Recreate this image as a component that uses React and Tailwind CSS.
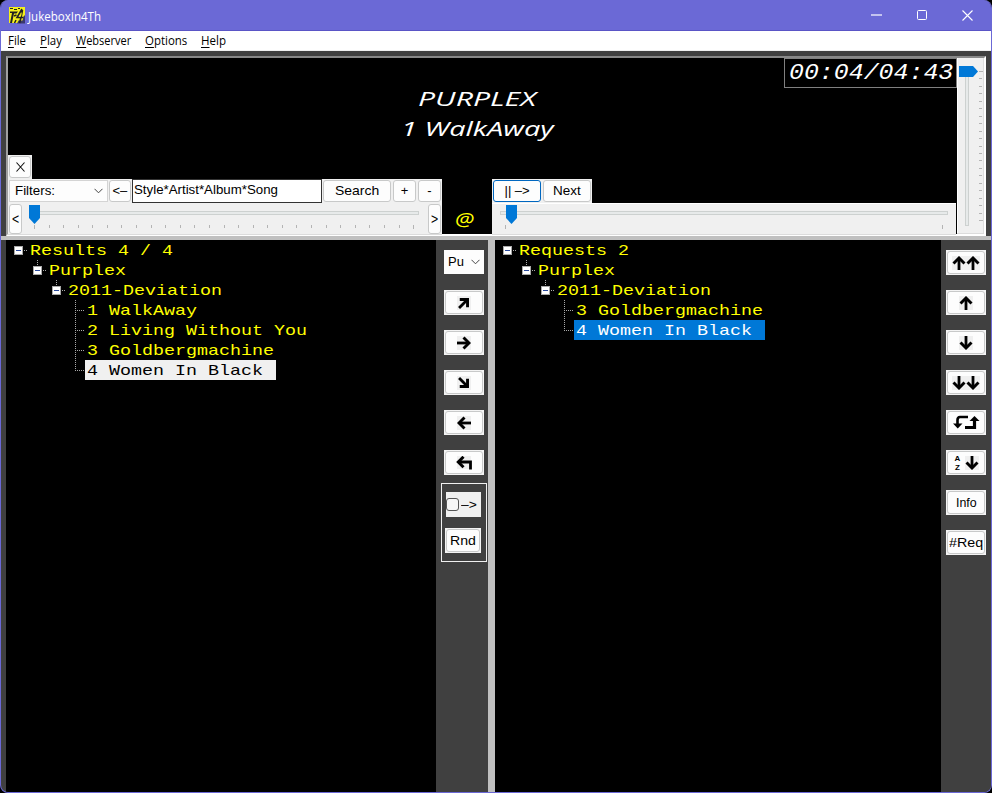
import React, { useLayoutEffect, useRef, useState } from "react";

// Stretches a run of text horizontally so that it fills exactly `w` pixels.
function Fit({ w, className = "", children }) {
  const ref = useRef(null);
  const [scale, setScale] = useState(1);
  useLayoutEffect(() => {
    setScale(w / ref.current.offsetWidth);
  }, [w]);
  return (
    <span className="inline-block shrink-0 whitespace-nowrap text-left" style={{ width: w }}>
      <span
        ref={ref}
        className={"inline-block origin-left whitespace-pre " + className}
        style={{ transform: `scaleX(${scale})` }}
      >
        {children}
      </span>
    </span>
  );
}

function AppIcon() {
  return (
    <svg width="17" height="17" viewBox="0 0 17 17">
      <rect width="16" height="16" fill="#f4f01c" />
      <path d="M1 1.500h3M5 2.500h3M9 1.500h2" stroke="#222" strokeWidth="1.200" />
      <path d="M1 4.500h8L7.500 6.500H5L3 16H1L3 6H1z" fill="#222" />
      <path d="M5 9l2.500-1M7 13l-1.500 3" stroke="#222" strokeWidth="1.500" />
      <path d="M16 8v8.500H8l1.500-3h4l1-4z" fill="#3a386c" />
      <path d="M13 2L8 10.500h4L10.500 16M13.500 3l-1.500 7.500h2.500" fill="none" stroke="#222" strokeWidth="1.600" />
      <path d="M13 5l-3 4.500h2z" fill="#f4f01c" />
    </svg>
  );
}

function TitleBar() {
  return (
    <div className="flex h-[31px] items-center border-b border-[#5a55c6] bg-[#6b69d6] pl-2">
      <AppIcon />
      <span className="ml-[2px] mt-[2px] leading-4">
        <Fit w={73} className="font-['Open_Sans'] text-[12px] text-white">JukeboxIn4Th</Fit>
      </span>
      <div className="ml-auto mr-[18px] flex items-center gap-[35px]">
        <svg width="11" height="11" shapeRendering="crispEdges"><path d="M0 5h11" stroke="#c3c2ef" strokeWidth="2" /></svg>
        <svg width="10" height="10"><rect x=".5" y=".5" width="9" height="9" rx="1" fill="none" stroke="#fff" /></svg>
        <svg width="11" height="11"><path d="M.5.5l10 10M10.500.5l-10 10" stroke="#fff" strokeWidth="1.100" /></svg>
      </div>
    </div>
  );
}

const menus = [
  ["F", "ile", 18],
  ["P", "lay", 22],
  ["W", "ebserver", 55],
  ["O", "ptions", 42],
  ["H", "elp", 25],
];

function MenuBar() {
  return (
    <div className="flex h-5 items-center gap-[14px] border-b border-[#f0f0f0] bg-white pl-[7px] font-['Open_Sans'] text-[12px] leading-4 text-black">
      {menus.map(([a, b, w]) => (
        <Fit key={b} w={w}>
          <span className="underline underline-offset-2">{a}</span>
          {b}
        </Fit>
      ))}
    </div>
  );
}

function Btn({ className = "", children }) {
  return (
    <div className={"flex items-center justify-center rounded-[3px] border border-[#c8c9c9] bg-[#fdfdfd] font-['Liberation_Sans'] text-[13px] leading-4 text-black " + className}>
      {children}
    </div>
  );
}

function Chevron() {
  return (
    <svg width="9" height="6" viewBox="0 0 9 6"><path d="M.5.800l4 4 4-4" fill="none" stroke="#444" /></svg>
  );
}

function HSlider({ width, start, end, thumb, ticks }) {
  return (
    <svg width={width} height="30" shapeRendering="crispEdges">
      <rect x={start + 0.5} y="7.500" width={end - start - 1} height="3" fill="#e7eaea" stroke="#cdd1d0" />
      {ticks.map((x, i) => {
        const edge = i === 0 || i === ticks.length - 1;
        return <rect key={x} x={Math.round(x)} y="21" width="1" height={edge ? 4 : 3} fill="#b4b4b4" />;
      })}
      <path d={`M${thumb} 1h11v13l-5.500 6l-5.500-6z`} fill="#0078d7" shapeRendering="auto" />
    </svg>
  );
}

function VSlider() {
  const ticks = Array.from({ length: 21 }, (_, i) => Math.round(13 + i * 7.45));
  return (
    <svg width="28" height="176" className="block border-b border-[#dcdcdc] bg-[#f0f0f0]" shapeRendering="crispEdges">
      <path d="M.5 0v176" stroke="#fff" />
      <path d="M26.500 0v176" stroke="#dedede" />
      <rect x="8.500" y="8.500" width="3" height="159" fill="#e7eaea" stroke="#cdd1d0" />
      {ticks.map((y, i) => (
        <rect key={y} x="22" y={y} width={i === 0 || i === 20 ? 4 : 3} height="1" fill="#b4b4b4" />
      ))}
      <path d="M2 8h14l5 5.500l-5 5.500h-14z" fill="#0078d7" shapeRendering="auto" />
    </svg>
  );
}

function LeftControls() {
  const ticks = Array.from({ length: 27 }, (_, i) => 12 + i * 14.58);
  return (
    <div className="w-[434px]">
      <div className="h-6 w-6 bg-[#f0f0f0] p-px">
        <Btn className="h-[22px] w-[22px]">
          <svg width="9" height="10"><path d="M.5.500l8 9M8.500.500l-8 9" stroke="#111" strokeWidth="1.100" /></svg>
        </Btn>
      </div>
      <div className="flex h-6 items-center bg-[#f0f0f0] pl-px">
        <div className="flex h-[22px] w-[99px] items-center justify-between border border-[#d4d4d4] bg-[#fdfdfd] pl-[5px] pr-[4px] font-['Liberation_Sans'] text-[13px] leading-4 text-black">
          <Fit w={40}>Filters:</Fit>
          <Chevron />
        </div>
        <Btn className="ml-px h-[22px] w-[22px]"><Fit w={15}>&lt;–</Fit></Btn>
        <div className="ml-px h-6 w-[190px] border border-[#333] bg-white pl-px pt-[2px] font-['Liberation_Sans'] text-[13px] leading-4 text-black">
          <Fit w={144}>Style*Artist*Album*Song</Fit>
        </div>
        <Btn className="ml-px h-[22px] w-[68px]"><Fit w={44}>Search</Fit></Btn>
        <Btn className="ml-[2px] h-[22px] w-[23px]">+</Btn>
        <Btn className="ml-[2px] h-[22px] w-[23px]">-</Btn>
      </div>
      <div className="flex h-8 items-start border-b border-[#dcdcdc] bg-[#f0f0f0] px-px pt-px">
        <Btn className="h-[30px] w-[13px] text-[14px]"><Fit w={7}>&lt;</Fit></Btn>
        <HSlider width={406} start={7} end={397} thumb={7} ticks={ticks} />
        <Btn className="h-[30px] w-[13px] text-[14px]"><Fit w={7}>&gt;</Fit></Btn>
      </div>
    </div>
  );
}

function RightControls() {
  return (
    <div className="w-[464px] pt-6">
      <div className="flex h-6 w-[100px] items-center gap-[2px] bg-[#f0f0f0] pl-px">
        <Btn className="h-[22px] w-12 border-[#0067c0]!"><Fit w={25}>|| –&gt;</Fit></Btn>
        <Btn className="h-[22px] w-12"><Fit w={28}>Next</Fit></Btn>
      </div>
      <div className="h-8 border-b border-t border-b-[#dcdcdc] border-t-white bg-[#f0f0f0]">
        <HSlider width={464} start={8} end={456} thumb={14} ticks={[13, 450]} />
      </div>
    </div>
  );
}

function TopPanel() {
  return (
    <div className="mx-[5px] mt-[5px] flex h-[180px] border-2 border-b-2 border-b-white border-l-[#a0a0a0] border-r-white border-t-[#888] bg-black">
      <div className="w-[949px]">
        <div className="flex h-[97px]">
          <div className="w-[776px] pt-[26px] font-['Open_Sans'] text-[20px] italic leading-[30px] text-white">
            <div className="pl-[410px]"><Fit w={118}>PURPLEX</Fit></div>
            <div className="pl-[393px]"><Fit w={152}>1 WalkAway</Fit></div>
          </div>
          <div className="h-[30px] w-[173px] border border-[#808080] pl-1 pt-px font-['Liberation_Mono'] text-[22px] italic leading-[27px] text-white">
            <Fit w={164}>00:04/04:43</Fit>
          </div>
        </div>
        <div className="flex">
          <LeftControls />
          <div className="w-[50px] pl-[13px] pt-[52px] font-['Open_Sans'] text-[19px] italic leading-6 text-[#ffff00]">
            <Fit w={19}>@</Fit>
          </div>
          <RightControls />
        </div>
      </div>
      <VSlider />
    </div>
  );
}

function Connector({ level, leaf, last }) {
  return (
    <svg width="14" height="20" className="shrink-0" shapeRendering="crispEdges">
      {leaf ? (
        <g stroke="#a8a8a8" strokeDasharray="1 1">
          <path d={last ? "M4.500 0v11" : "M4.500 0v20"} />
          <path d="M4 10.500h9" />
        </g>
      ) : (
        <g>
          {level > 0 && <path d="M4.500 0v6" stroke="#a8a8a8" strokeDasharray="1 1" />}
          <path d="M10 10.500h4" stroke="#a8a8a8" strokeDasharray="1 1" />
          <rect x=".5" y="6.500" width="8" height="8" fill="#fff" stroke="#a9a9a9" />
          <path d="M2 10.500h5" stroke="#27479b" />
        </g>
      )}
    </svg>
  );
}

const indents = ["pl-2", "pl-[27px]", "pl-[46px]", "pl-[65px]"];

function Tree({ rows, selected, className }) {
  return (
    <div className={"bg-black font-['Liberation_Mono'] text-[15px] leading-5 text-[#ffff00] " + className}>
      {rows.map(([level, text], i) => {
        const last = i === rows.length - 1;
        return (
          <div key={text} className={"flex h-5 " + indents[level]}>
            <Connector level={level} leaf={level === 3} last={last} />
            <div className={"h-5 pl-[2px] pt-[2px] " + (last ? "w-[191px] " + selected : "")}>
              <Fit w={text.length * 11}>{text}</Fit>
            </div>
          </div>
        );
      })}
    </div>
  );
}

function ToolBtn({ children, className = "w-10" }) {
  return (
    <div className={"h-[25px] bg-[#f4f4f4] p-px " + className}>
      <Btn className="h-full w-full">{children}</Btn>
    </div>
  );
}

const turns = { right: 0, downRight: 45, down: 90, left: 180, up: 270, upRight: 315 };

function Arrow({ dir }) {
  return (
    <svg width="14" height="14" viewBox="0 0 14 14" className="shrink-0 bg-[#f0f0f0]">
      <g transform={`rotate(${turns[dir]} 7 7)`} fill="none" stroke="#000">
        <path d="M0 7h12" strokeWidth="2.800" />
        <path d="M6.500 1.500l5.500 5.500-5.500 5.500" strokeWidth="2.900" />
      </g>
    </svg>
  );
}

function BackIcon() {
  return (
    <svg width="17" height="14" viewBox="0 0 17 14">
      <rect x="1" width="14" height="13" fill="#f0f0f0" />
      <path d="M2 6h12.500v7.500" fill="none" stroke="#000" strokeWidth="2.800" />
      <path d="M7.500 .8L2.300 6L7.500 11.200" fill="none" stroke="#000" strokeWidth="3" />
    </svg>
  );
}

function LoopIcon() {
  return (
    <svg width="27" height="15" viewBox="0 0 27 15" fill="none" stroke="#000" className="shrink-0">
      <path d="M15 2H7Q4.500 2 4.500 5v6" strokeWidth="2.600" />
      <path d="M0 8.500h9.500l-4.750 5z" fill="#000" stroke="none" />
      <path d="M12 12.500h9.500V4" strokeWidth="3.200" />
      <path d="M16.500 6h10L21.500 1z" fill="#000" stroke="none" />
    </svg>
  );
}

function SortIcon() {
  return (
    <div className="flex items-center gap-[3px]">
      <div className="w-2 text-center font-['Liberation_Sans'] text-[8px] font-bold leading-[9px]">
        <div>A</div>
        <div>Z</div>
      </div>
      <Arrow dir="down" />
    </div>
  );
}

function MiddleColumn() {
  return (
    <div className="flex w-[52px] flex-col items-start bg-[#404040] pl-[5px] pt-[10px]">
      <div className="ml-[3px] flex flex-col gap-[15px]">
        <div className="mb-px flex h-6 w-10 items-center justify-between bg-[#fdfdfd] pl-[4px] pr-[4px] font-['Liberation_Sans'] text-[13px] leading-4">
          <Fit w={16}>Pu</Fit>
          <Chevron />
        </div>
        <ToolBtn><Arrow dir="upRight" /></ToolBtn>
        <ToolBtn><Arrow dir="right" /></ToolBtn>
        <ToolBtn><Arrow dir="downRight" /></ToolBtn>
        <ToolBtn><Arrow dir="left" /></ToolBtn>
        <ToolBtn><BackIcon /></ToolBtn>
      </div>
      <div className="mt-2 flex h-[79px] w-[46px] flex-col gap-[11px] border border-[#f0f0f0] pl-[3px] pt-2">
        <div className="ml-px flex h-[25px] w-[35px] items-center gap-[2px] bg-[#f0f0f0] font-['Liberation_Sans'] text-[13px] leading-4">
          <span className="h-[13px] w-[13px] rounded-[3px] border border-[#555] bg-[#f6f6f6]" />
          <Fit w={16}>–&gt;</Fit>
        </div>
        <ToolBtn className="w-9"><Fit w={26}>Rnd</Fit></ToolBtn>
      </div>
    </div>
  );
}

function RightColumn() {
  return (
    <div className="flex flex-1 flex-col gap-[15px] bg-[#404040] pl-[5px] pt-[10px]">
      <ToolBtn><Arrow dir="up" /><Arrow dir="up" /></ToolBtn>
      <ToolBtn><Arrow dir="up" /></ToolBtn>
      <ToolBtn><Arrow dir="down" /></ToolBtn>
      <ToolBtn><Arrow dir="down" /><Arrow dir="down" /></ToolBtn>
      <ToolBtn><LoopIcon /></ToolBtn>
      <ToolBtn><SortIcon /></ToolBtn>
      <ToolBtn><Fit w={21}>Info</Fit></ToolBtn>
      <ToolBtn><Fit w={34}>#Req</Fit></ToolBtn>
    </div>
  );
}

const results = [
  [0, "Results 4 / 4"],
  [1, "Purplex"],
  [2, "2011-Deviation"],
  [3, "1 WalkAway"],
  [3, "2 Living Without You"],
  [3, "3 Goldbergmachine"],
  [3, "4 Women In Black"],
];

const requests = [
  [0, "Requests 2"],
  [1, "Purplex"],
  [2, "2011-Deviation"],
  [3, "3 Goldbergmachine"],
  [3, "4 Women In Black"],
];

export default function App() {
  return (
    <div className="h-[793px] w-[992px] overflow-hidden bg-black">
      <div className="flex h-full flex-col overflow-hidden rounded-[8px] border border-t-0 border-[#6b69d6] bg-[#404040]">
        <TitleBar />
        <MenuBar />
        <TopPanel />
        <div className="h-1 shrink-0 bg-[#c0c0c0]" />
        <div className="flex flex-1 pl-[5px]">
          <Tree rows={results} selected="bg-[#f0f0f0] text-black" className="w-[430px]" />
          <MiddleColumn />
          <div className="w-[7px] bg-[#c0c0c0]" />
          <Tree rows={requests} selected="bg-[#0078d7] text-white" className="w-[446px]" />
          <RightColumn />
        </div>
      </div>
    </div>
  );
}
